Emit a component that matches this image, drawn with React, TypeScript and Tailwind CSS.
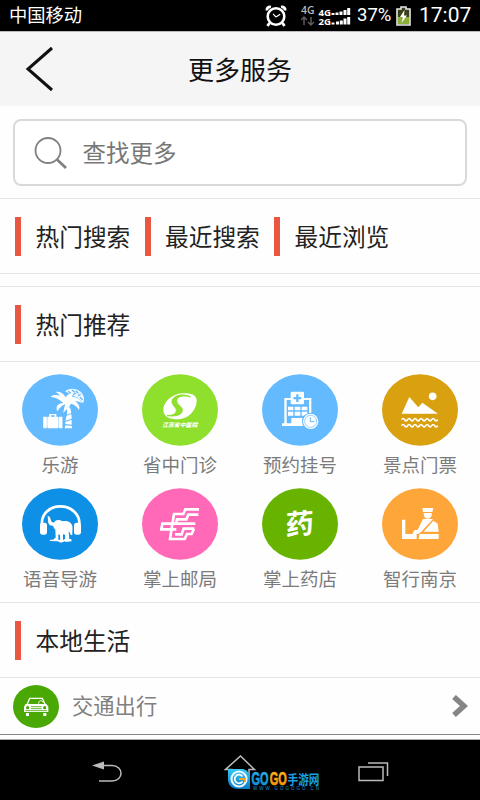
import type { ReactNode } from 'react';

const CJK = "font-['Noto_Sans_CJK_SC',sans-serif]";

function StatusBar() {
  return (
    <div className="flex h-[31px] items-center bg-black pl-[9px] pr-[9px] text-white">
      <span className="-mt-[3px] text-[18.3px] leading-none">中国移动</span>
      <svg className="ml-auto h-[22px] w-[22px]" viewBox="0 0 22 22" fill="none" stroke="#fff">
        <circle cx="11" cy="11.5" r="8.3" strokeWidth="2.6" />
        <path d="M11 12l-3-3.2M11 12l4.2-2.8" strokeWidth="1.2" />
        <path d="M2 5.5C1.5 3 3.500 1.500 6 2M20 5.500C20.500 3 18.500 1.500 16 2M4.500 18L2.500 21M17.500 18l2 3" strokeWidth="2.8" />
      </svg>
      <svg
        className="ml-[14px] h-[24px] w-[53px] font-['Open_Sans',sans-serif]"
        viewBox="0 0 53 24"
        fill="#fff"
      >
        <text x="0" y="10" fontSize="10" fontWeight="600" fill="#bbb" textLength="13.5" lengthAdjust="spacingAndGlyphs">4G</text>
        <path d="M3 21v-8M0 16l3-3 3 3M10 13v8M7 18l3 3 3-3" fill="none" stroke="#5c5c5c" strokeWidth="1.500" />
        <text x="17.500" y="11.500" fontSize="9" fontWeight="700" textLength="12.500" lengthAdjust="spacingAndGlyphs">4G</text>
        <text x="17.500" y="20.500" fontSize="9" fontWeight="700" textLength="12.500" lengthAdjust="spacingAndGlyphs">2G</text>
        <path d="M30.500 9h3v2h-3zM34.500 8.500h3v2.500h-3zM38.500 7.500h3V11h-3zM42.500 6h3v5h-3zM46.200 4h3v7h-3z" />
        <path d="M30.500 18.500h3v2h-3zM35 17.500h3v3h-3zM38.800 16.500h3v4h-3zM42.500 14.500h3v6h-3zM46.200 13h3v7.500h-3z" />
      </svg>
      <span className="ml-[3px] w-[34px] whitespace-nowrap font-['Roboto',sans-serif] text-[18.500px] leading-none">37%</span>
      <svg className="ml-[5px] h-[20px] w-[15px]" viewBox="0 0 15 20">
        <path d="M5 1h5v2h4v16H1V3h4z" fill="#38411c" stroke="#e8e8e8" strokeWidth="1.600" />
        <path d="M2 11h11v7H2z" fill="#8caf3a" />
        <path d="M8.500 4L4 11h3l-1.500 6L11 9.500H8z" fill="#fff" />
      </svg>
      <span className="ml-[8px] w-[52px] whitespace-nowrap text-right font-['Roboto',sans-serif] text-[21px] leading-none">17:07</span>
    </div>
  );
}

function Header() {
  return (
    <header className="flex h-[75px] items-center border-t border-[#bbb] bg-[#f5f5f5] pl-[25px] pr-[53px]">
      <svg className="h-[46px] w-[28px]" viewBox="0 0 28 46" fill="none" stroke="#111" strokeWidth="3">
        <path d="M27 2L3 23l24 21" />
      </svg>
      <h1 className="flex-1 text-center text-[26px] leading-none text-[#111]">更多服务</h1>
    </header>
  );
}

function Marked({ children }: { children: ReactNode }) {
  return (
    <div className="flex items-center">
      <span className="h-[39px] w-[6px] bg-[#e95743]" />
      <span className="w-[109px] whitespace-nowrap pl-[14.500px] pt-[2px] text-[23.700px] leading-none text-[#222]">{children}</span>
    </div>
  );
}

function TravelIcon() {
  return (
    <g>
      <path d="M64 128h10v35H64zM77 128h31v35H77zM111 128h10v35h-10zM82 128v-8h21v8h-5v-4H87v4z" />
      <path d="M64 130h57v30H64z" opacity=".6" />
      <path d="M135 102l9-2 4 17-13 5zM134 125l14-5 1 14-19 6zM130 144l19-7v15l-19-2zM130 154l20 2v7h-22z" />
      <path d="M124 87c-10-7-17-17-38-18 5-6 18-7 27-4-4-6-7-9-13-11 15-2 24 4 31 16 6-11 18-15 31-12-7 1-11 5-13 10 14 0 26 8 31 20-7-5-14-7-20-6 10 8 15 17 11 26-6-10-13-17-25-19-3 11-12 15-22 28 1-12 4-19 6-26-8 2-16 8-24 21-6-14 1-24 18-25z" />
      <path d="M129 52c10-10 34-11 47 2 11 11 13 22 7 34L168 72z" opacity=".9" />
      <path d="M139 52l7 6M150 48l8 7M161 50l8 8M153 62l9-5M168 65l8-4M174 70l8 7" stroke="#63baff" strokeWidth="4" />
    </g>
  );
}

function HospitalIcon() {
  return (
    <g>
      <path d="M121 58c20-1 42 2 43 20 1 27-22 58-58 58-22 0-42-6-42-30 0-20 26-47 57-48z" />
      <path
        d="M146 69c-18-7-42-3-42 11 0 13 18 16 17 30-1 13-20 18-46 15 16 0 27-5 28-15 1-11-15-17-13-29 3-18 36-24 56-12z"
        fill="#8fdf2d"
        stroke="#8fdf2d"
        strokeWidth="3"
      />
      <text x="60" y="160" fontSize="17" fontWeight="900" fontStyle="italic" textLength="106" lengthAdjust="spacingAndGlyphs">江苏省中医院</text>
    </g>
  );
}

function RegisterIcon() {
  return (
    <g>
      <path d="M67 72h22v6H74v70h-7zM126 72h22v50h-7V78h-15zM60 148h66v8H60z" />
      <rect x="86" y="53" width="40" height="38" rx="4" />
      <path d="M102.500 61h7v8h8v7h-8v8h-7v-8h-8v-7h8z" fill="#63baff" />
      <path d="M78 98h16v11H78zM98 98h17v11H98zM119 98h17v11h-17zM78 113h16v12H78zM98 113h17v12H98zM119 113h17v12h-17zM88 132h34v20H88z" />
      <circle cx="146" cy="142" r="26" fill="#63baff" />
      <circle cx="146" cy="142" r="23" />
      <circle cx="146" cy="142" r="18" fill="none" stroke="#63baff" strokeWidth="2" />
      <path d="M145 130v13h12" fill="none" stroke="#63baff" strokeWidth="3" />
    </g>
  );
}

function SceneryIcon() {
  return (
    <g>
      <circle cx="152" cy="67" r="11.500" />
      <path d="M59 119l23-50 27 31 12-14 47 33z" />
      <path
        d="M59 137q4-7 9 0t9 0 9 0 9 0 9 0 9 0 9 0 9 0 9 0 9 0 9 0 9 0M59 155q4-7 9 0t9 0 9 0 9 0 9 0 9 0 9 0 9 0 9 0 9 0 9 0 9 0"
        fill="none"
        stroke="#fff"
        strokeWidth="5"
      />
    </g>
  );
}

function AudioIcon() {
  return (
    <g>
      <path d="M60 112c-4-33 22-57 55-57s60 24 57 57" fill="none" stroke="#fff" strokeWidth="8" />
      <rect x="54" y="104" width="21" height="36" rx="8" />
      <rect x="156" y="104" width="21" height="36" rx="8" />
      <path d="M77 83c5 1 8 5 9 11 2 8 5 11 11 9 3-8 16-9 24-3 12-4 28 2 30 14 2 9-1 17 0 26l-5 2c-1-7-4-9-6-13l2 26h6l1 5-19 2-1-22-6-1v20l-8 2-1-20-5-2v17l-13 2v-6l5-3-1-24c-4-4-6-9-7-12-10 2-15-5-15-16z" />
      <path d="M83 156l17-2 21 3 10-5 18 2-4 5-17 1-11 4-10-4-23-1z" />
    </g>
  );
}

function PostIcon() {
  return (
    <g fill="none" stroke="#fff" strokeWidth="8">
      <path d="M171 64h-41l-6 14H96l-12 75h44l7-15h14l7-16" />
      <path d="M169 80h-30l-6 14h-28l-3 14" />
      <path d="M160 107H61l-3 17h45" />
      <path d="M157 122h-32l-6 17H99" />
    </g>
  );
}

function MedicineIcon() {
  return (
    <text x="0" y="0" fontSize="84" fontWeight="700" transform="translate(71 142) skewY(-5)">药</text>
  );
}

function OfficerIcon() {
  return (
    <g>
      <path d="M121 60h33l-3 12h-28zM125 75h24c1 11-4 17-12 17s-12-6-12-17zM60 95h10v43h34v15H60z" />
      <path d="M123 93h30l-35 38-9 7H91l6-11 10-2zM154 98l13 9 3 24h-45zM113 138h57v15h-60z" />
    </g>
  );
}

const services = [
  { label: '乐游', color: '#63baff', icon: <TravelIcon /> },
  { label: '省中门诊', color: '#8fdf2d', icon: <HospitalIcon /> },
  { label: '预约挂号', color: '#63baff', icon: <RegisterIcon /> },
  { label: '景点门票', color: '#d9a010', icon: <SceneryIcon /> },
  { label: '语音导游', color: '#0d90e6', icon: <AudioIcon /> },
  { label: '掌上邮局', color: '#ff69b8', icon: <PostIcon /> },
  { label: '掌上药店', color: '#67b300', icon: <MedicineIcon /> },
  { label: '智行南京', color: '#ffa63a', icon: <OfficerIcon /> },
];

function NavBar() {
  return (
    <nav className="relative flex h-[61px] shrink-0 items-start border-t border-[#aaa] bg-black pt-[15px]">
      <svg className="ml-[91px] mt-[6px] h-[22px] w-[32px]" viewBox="0 0 32 22">
        <path d="M12 4.500h9c12 0 12 15.500 0 15.500H8" fill="none" stroke="#bbb" strokeWidth="1.500" />
        <path d="M1 4.500L13 .5v8z" fill="#bbb" />
      </svg>
      <svg className="ml-[101px] h-[28px] w-[33px]" viewBox="0 0 33 28" fill="none" stroke="#bbb" strokeWidth="1.500">
        <path d="M8 25V14.500H1.500L16.500 1l14 13.500H25V25" />
      </svg>
      <svg className="ml-[101px] mt-[7px] h-[20px] w-[31px]" viewBox="0 0 31 20" fill="none" stroke="#bbb" strokeWidth="1.500">
        <path d="M1 5h24v13.500H1zM10 1h19.500v13" />
      </svg>
      <svg className="absolute left-[227px] top-[27px] h-[26px] w-[96px] overflow-visible" viewBox="0 0 96 26">
        <defs>
          <linearGradient id="blue" x1="0" y1="0" x2="0" y2="1">
            <stop offset="0" stopColor="#35c8f5" />
            <stop offset="1" stopColor="#0878c8" />
          </linearGradient>
          <linearGradient id="orange" x1="0" y1="0" x2="0" y2="1">
            <stop offset="0" stopColor="#ffc928" />
            <stop offset="1" stopColor="#f28208" />
          </linearGradient>
        </defs>
        <path d="M1 2h15q7 2 7 9v11H12Q1 22 1 12z" fill="url(#blue)" />
        <circle cx="12" cy="12" r="7.500" fill="none" stroke="#e9f7ff" strokeWidth="2.200" />
        <path d="M15.500 9.500a4.300 4.300 0 1 0 0 5" fill="none" stroke="#fff" strokeWidth="1.800" />
        <path d="M12 12h6v3" fill="none" stroke="#f7a520" strokeWidth="1.800" />
        <g fontWeight="700" strokeWidth=".7">
          <text x="24.500" y="17.500" fontSize="18" fill="url(#blue)" stroke="#1a9fe0" textLength="17" lengthAdjust="spacingAndGlyphs" fontFamily="Liberation Sans">GO</text>
          <text x="42.800" y="17.500" fontSize="18" fill="url(#orange)" stroke="#f8a216" textLength="17" lengthAdjust="spacingAndGlyphs" fontFamily="Liberation Sans">GO</text>
          <text x="60.500" y="16.500" fontSize="13" fill="#1a9fe0" textLength="32" lengthAdjust="spacingAndGlyphs">手游网</text>
        </g>
        <text x="26" y="23" fontSize="4.500" fill="#1b94cf" textLength="66" fontFamily="Liberation Sans">WWW.GOGOGO.CN</text>
      </svg>
    </nav>
  );
}

export default function App() {
  return (
    <div className={`flex h-[800px] w-[480px] flex-col overflow-hidden bg-[#fefefe] ${CJK}`}>
      <StatusBar />
      <Header />

      <div className="h-[92px] px-[13px] pt-[13px]">
        <div className="flex h-[67px] items-center rounded-lg border-2 border-[#d9d9d9] bg-white pl-[19px]">
          <svg className="h-[34px] w-[34px]" viewBox="0 0 34 34" fill="none" stroke="#808080">
            <circle cx="14" cy="14.500" r="12.500" strokeWidth="1.800" />
            <path d="M23 23.500l9 8.500" strokeWidth="2.700" />
          </svg>
          <span className="ml-[14.500px] pt-px text-[23.500px] leading-none text-[#777]">查找更多</span>
        </div>
      </div>

      <div className="flex h-[76px] items-center gap-[14.500px] border-y border-[#e5e5e5] pl-[15px]">
        <Marked>热门搜索</Marked>
        <Marked>最近搜索</Marked>
        <Marked>最近浏览</Marked>
      </div>

      <div className="mt-[12px] flex h-[76px] items-center border-y border-[#e5e5e5] pl-[15px]">
        <Marked>热门推荐</Marked>
      </div>

      <div className="grid h-[240px] grid-cols-4 content-start pt-[12px]">
        {services.map(({ label, color, icon }) => (
          <div key={label} className="flex h-[114px] flex-col items-center">
            <svg className="h-[72px] w-[76px]" viewBox="0 0 228 216" fill="#fff">
              <ellipse cx="114" cy="108" rx="114" ry="107" fill={color} />
              {icon}
            </svg>
            <span className="mt-[9px] text-[18.500px] leading-none text-[#7b7b7b]">{label}</span>
          </div>
        ))}
      </div>

      <div className="flex h-[76px] items-center border-y border-[#e5e5e5] pl-[15px]">
        <Marked>本地生活</Marked>
      </div>

      <div className="flex h-[57px] items-center border-b border-[#888] pl-[13px] pr-[12px]">
        <svg className="h-[43px] w-[46px]" viewBox="0 0 138 129">
          <ellipse cx="69" cy="64.500" rx="69" ry="64.500" fill="#4aa805" />
          <g fill="none" stroke="#fff" strokeWidth="4">
            <path d="M42 59l8-19h38l9 19" />
            <path d="M77 56c0-11 10-12 14-3" strokeWidth="3" />
          </g>
          <path d="M38 57h62l6 8v16H33V65zM39 84h9v9h-9zM91 84h9v9h-9z" fill="#fff" />
          <circle cx="44" cy="68" r="5" fill="#4aa805" />
          <circle cx="95" cy="68" r="5" fill="#4aa805" />
          <path d="M54 65h32M54 71h32M37 77h65" stroke="#4aa805" strokeWidth="2.500" />
        </svg>
        <span className="-mt-[2px] ml-[13px] text-[21.300px] leading-none text-[#808080]">交通出行</span>
        <svg className="ml-auto h-[22px] w-[16px]" viewBox="0 0 16 22" fill="none" stroke="#858585" strokeWidth="5.500">
          <path d="M2 2l10 9-10 9" />
        </svg>
      </div>
      <div className="h-[4px] shrink-0" />

      <NavBar />
    </div>
  );
}
